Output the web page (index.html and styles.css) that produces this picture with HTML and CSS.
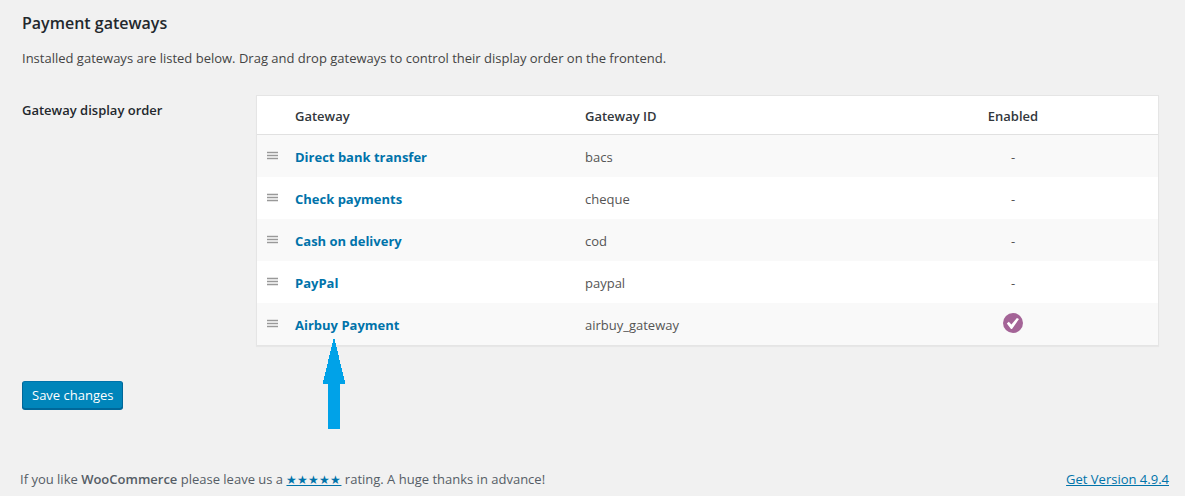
FILE: index.html
```
<!DOCTYPE html>
<html lang="en">
<head>
<meta charset="utf-8">
<title>Payment gateways</title>
<link rel="stylesheet" href="styles.css">
</head>
<body>
<svg class="sprite" aria-hidden="true">
  <symbol id="grip" viewBox="0 0 11 9"><path fill="#e4e4e4" d="M0 0h11v9H0z"/><path fill="#999" d="M0 1h11v1H0zM0 4h11v1H0zM0 7h11v1H0z"/></symbol>
</svg>
<main class="settings">
  <h2 class="title">Payment gateways</h2>
  <p class="intro">Installed gateways are listed below. Drag and drop gateways to control their display order on the frontend.</p>
  <form class="form">
    <div class="field">
      <h3 class="label" id="order-label">Gateway display order</h3>
      <table class="gateways" aria-labelledby="order-label">
        <thead>
          <tr><th class="sort"></th><th class="name">Gateway</th><th class="id">Gateway ID</th><th class="status">Enabled</th></tr>
        </thead>
        <tbody>
          <tr><td class="sort"><svg class="grip"><use href="#grip"/></svg></td><td class="name"><a href="#bacs">Direct bank transfer</a></td><td>bacs</td><td class="status">-</td></tr>
          <tr><td class="sort"><svg class="grip"><use href="#grip"/></svg></td><td class="name"><a href="#cheque">Check payments</a></td><td>cheque</td><td class="status">-</td></tr>
          <tr><td class="sort"><svg class="grip"><use href="#grip"/></svg></td><td class="name"><a href="#cod">Cash on delivery</a></td><td>cod</td><td class="status">-</td></tr>
          <tr><td class="sort"><svg class="grip"><use href="#grip"/></svg></td><td class="name"><a href="#paypal">PayPal</a></td><td>paypal</td><td class="status">-</td></tr>
          <tr><td class="sort"><svg class="grip"><use href="#grip"/></svg></td><td class="name pointed"><a href="#airbuy">Airbuy Payment</a><svg class="arrow" viewBox="0 0 22 90" aria-hidden="true" shape-rendering="crispEdges"><path fill="#00a2e8" d="M10.5 0h1L22 43v2h-5v45H5V45H0v-2z"/></svg></td><td>airbuy_gateway</td><td class="status"><svg class="tick" viewBox="0 0 20 20" role="img" aria-label="Yes"><circle cx="10" cy="10" r="10" fill="#a46497"/><path fill="#fff" d="M3.8 10.4 5.8 8.8 8.4 11.5 13.9 4.9 16 6.1 9 15.9 8 15.9z"/></svg></td></tr>
        </tbody>
      </table>
    </div>
    <button class="save" type="button">Save changes</button>
  </form>
</main>
<footer class="footer">
  <p>If you like <strong>WooCommerce</strong> please leave us a <a class="stars" href="#rate">★★★★★</a> rating. A huge thanks in advance!</p>
  <a class="version" href="#update">Get Version 4.9.4</a>
</footer>
</body>
</html>
```
FILE: styles.css
```
* { box-sizing: border-box; }
body {
  margin: 0;
  background: #f1f1f1;
  color: #444;
  font: 13px/20px "Open Sans", "Noto Sans", sans-serif;
}
a { color: #0073aa; }
.sprite { display: none; }
.settings { padding: 12px 26px 0 22px; }
.title { margin: 0; font-size: 16px; line-height: 22px; font-weight: 600; color: #23282d; }
.intro { margin: 14px 0 27px; }
.field { display: grid; grid-template-columns: 234px 1fr; align-items: start; }
.label { margin: 5px 0 0; font-size: 13px; line-height: 20px; font-weight: 600; color: #23282d; }
.gateways {
  width: 100%;
  table-layout: fixed;
  border-collapse: separate;
  border-spacing: 0;
  border: 1px solid #e5e5e5;
  box-shadow: 0 1px 1px rgba(0, 0, 0, 0.04);
  background: #fff;
}
.gateways th {
  height: 39px;
  padding: 2px 10px 0;
  border-bottom: 1px solid #e1e1e1;
  text-align: left;
  font-weight: 600;
  color: #32373c;
}
.gateways td { height: 42px; padding: 2px 10px 0; color: #555; }
.gateways tbody tr:nth-child(odd) { background: #f9f9f9; }
.gateways .sort { width: 28px; padding: 0 0 2px 10px; }
.gateways .name { width: 290px; }
.gateways .status { text-align: center; }
.gateways th.id { width: 293px; }
.name a { font-weight: 700; text-decoration: none; }
.grip { display: block; width: 11px; height: 9px; }
.pointed { position: relative; }
.arrow { position: absolute; left: 38px; top: 36px; width: 22px; height: 90px; }
.gateways .tick { display: block; width: 20px; height: 20px; margin: -4px auto 0; }
.save {
  display: block;
  height: 28px;
  margin-top: 35px;
  padding: 0 9px;
  border: 1px solid #006799;
  border-top-color: #0073aa;
  border-radius: 3px;
  background: #0085ba;
  box-shadow: 0 1px 0 #006799;
  color: #fff;
  font: inherit;
}
.footer {
  display: flex;
  justify-content: space-between;
  padding: 60px 16px 16px 20px;
  color: #555d66;
}
.footer p { margin: 0; }
.footer strong { font-weight: 600; }
.stars { font-size: 12px; }
```
